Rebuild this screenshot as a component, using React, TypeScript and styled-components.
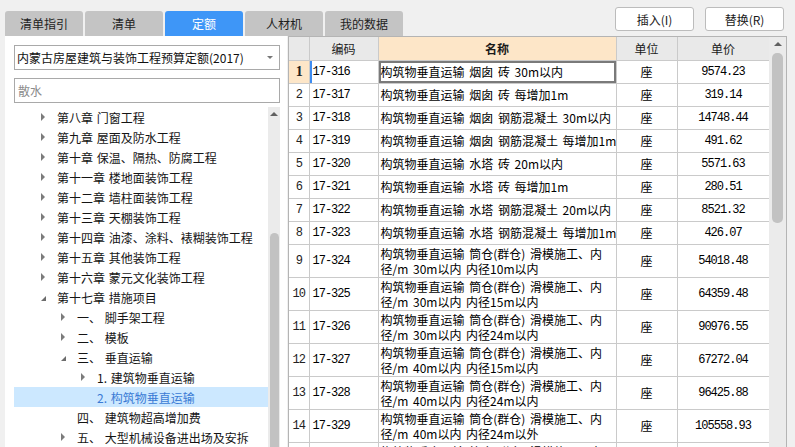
import React, { FC } from "react";
import styled, { createGlobalStyle } from "styled-components";

type TreeNode = {
  label: string;
  level: number;
  arrow: "closed" | "open" | "none";
  selected?: boolean;
};

type Row = {
  no: number;
  code: string;
  name: string;
  unit: string;
  price: string;
};

const tabs = ["清单指引", "清单", "定额", "人材机", "我的数据"];

const tree: TreeNode[] = [
  { label: "第八章 门窗工程", level: 1, arrow: "closed" },
  { label: "第九章 屋面及防水工程", level: 1, arrow: "closed" },
  { label: "第十章 保温、隔热、防腐工程", level: 1, arrow: "closed" },
  { label: "第十一章 楼地面装饰工程", level: 1, arrow: "closed" },
  { label: "第十二章 墙柱面装饰工程", level: 1, arrow: "closed" },
  { label: "第十三章 天棚装饰工程", level: 1, arrow: "closed" },
  { label: "第十四章 油漆、涂料、裱糊装饰工程", level: 1, arrow: "closed" },
  { label: "第十五章 其他装饰工程", level: 1, arrow: "closed" },
  { label: "第十六章 蒙元文化装饰工程", level: 1, arrow: "closed" },
  { label: "第十七章 措施项目", level: 1, arrow: "open" },
  { label: "一、 脚手架工程", level: 2, arrow: "closed" },
  { label: "二、 模板", level: 2, arrow: "closed" },
  { label: "三、 垂直运输", level: 2, arrow: "open" },
  { label: "1. 建筑物垂直运输", level: 3, arrow: "closed" },
  { label: "2. 构筑物垂直运输", level: 3, arrow: "none", selected: true },
  { label: "四、 建筑物超高增加费", level: 2, arrow: "none" },
  { label: "五、 大型机械设备进出场及安拆", level: 2, arrow: "closed" },
];

const silo = "构筑物垂直运输 筒仓(群仓) 滑模施工、内\n径/m ";

const rows: Row[] = [
  { no: 1, code: "17-316", name: "构筑物垂直运输 烟囱 砖 30m以内", unit: "座", price: "9574.23" },
  { no: 2, code: "17-317", name: "构筑物垂直运输 烟囱 砖 每增加1m", unit: "座", price: "319.14" },
  { no: 3, code: "17-318", name: "构筑物垂直运输 烟囱 钢筋混凝土 30m以内", unit: "座", price: "14748.44" },
  { no: 4, code: "17-319", name: "构筑物垂直运输 烟囱 钢筋混凝土 每增加1m", unit: "座", price: "491.62" },
  { no: 5, code: "17-320", name: "构筑物垂直运输 水塔 砖 20m以内", unit: "座", price: "5571.63" },
  { no: 6, code: "17-321", name: "构筑物垂直运输 水塔 砖 每增加1m", unit: "座", price: "280.51" },
  { no: 7, code: "17-322", name: "构筑物垂直运输 水塔 钢筋混凝土 20m以内", unit: "座", price: "8521.32" },
  { no: 8, code: "17-323", name: "构筑物垂直运输 水塔 钢筋混凝土 每增加1m", unit: "座", price: "426.07" },
  { no: 9, code: "17-324", name: silo + "30m以内 内径10m以内", unit: "座", price: "54018.48" },
  { no: 10, code: "17-325", name: silo + "30m以内 内径15m以内", unit: "座", price: "64359.48" },
  { no: 11, code: "17-326", name: silo + "30m以内 内径24m以内", unit: "座", price: "90976.55" },
  { no: 12, code: "17-327", name: silo + "40m以内 内径15m以内", unit: "座", price: "67272.04" },
  { no: 13, code: "17-328", name: silo + "40m以内 内径24m以内", unit: "座", price: "96425.88" },
  { no: 14, code: "17-329", name: silo + "40m以内 内径24m以外", unit: "座", price: "105558.93" },
  { no: 15, code: "17-330", name: silo + "50m以内 内径10m以内", unit: "座", price: "71860.25" },
];

const App: FC = () => {
  return (
    <>
      <GlobalStyle />
      <Page>
        <TopBar>
          <Tabs>
            {tabs.map((t) => (
              <Tab key={t} $active={t == "定额"}>
                {t}
              </Tab>
            ))}
          </Tabs>
          <Actions>
            <Button>插入(I)</Button>
            <Button>替换(R)</Button>
          </Actions>
        </TopBar>
        <Main>
          <Sidebar>
            <Select>
              <span>内蒙古房屋建筑与装饰工程预算定额(2017)</span>
              <SelectCaret />
            </Select>
            <SearchBox>散水</SearchBox>
            <TreeArea>
              <TreeList>
                {tree.map((n) => (
                  <TreeRow key={n.label} $level={n.level} $selected={n.selected}>
                    <ArrowBox>
                      {n.arrow == "closed" && <Closed />}
                      {n.arrow == "open" && <Open />}
                    </ArrowBox>
                    <span>{n.label}</span>
                  </TreeRow>
                ))}
              </TreeList>
              <ScrollBar $width={12}>
                <ScrollUp />
                <Thumb $top={117} $height={260} $width={9} />
              </ScrollBar>
            </TreeArea>
          </Sidebar>
          <TablePanel>
            <TableWrap>
              <Grid>
                <colgroup>
                  <col style={{ width: 20 }} />
                  <col style={{ width: 69 }} />
                  <col style={{ width: 238 }} />
                  <col style={{ width: 61 }} />
                  <col style={{ width: 92 }} />
                </colgroup>
                <thead>
                  <tr>
                    <HeadCell />
                    <HeadCell>编码</HeadCell>
                    <HeadCell $key>名称</HeadCell>
                    <HeadCell>单位</HeadCell>
                    <HeadCell>单价</HeadCell>
                  </tr>
                </thead>
                <tbody>
                  {rows.map((r) => {
                    const tall = r.name.includes("\n");
                    const active = r.no == 1;
                    return (
                      <tr key={r.no}>
                        <NoCell $tall={tall} $active={active}>
                          {r.no}
                        </NoCell>
                        <CodeCell $tall={tall} $active={active}>
                          {r.code}
                        </CodeCell>
                        <NameCell $tall={tall} $active={active}>
                          {r.name}
                        </NameCell>
                        <UnitCell $tall={tall}>{r.unit}</UnitCell>
                        <PriceCell $tall={tall}>{r.price}</PriceCell>
                      </tr>
                    );
                  })}
                </tbody>
              </Grid>
            </TableWrap>
            <ScrollBar $width={17}>
              <ScrollUp />
              <Thumb $top={7} $height={170} $width={11} />
            </ScrollBar>
          </TablePanel>
        </Main>
      </Page>
    </>
  );
};

const GlobalStyle = createGlobalStyle`
  html, body {
    margin: 0;
    padding: 0;
    background: #f0f0f0;
  }
  body {
    font-family: "Noto Sans CJK SC", "Noto Sans", sans-serif;
    font-size: 12px;
    color: #1a1a1a;
  }
  * {
    box-sizing: border-box;
  }
`;

const Page = styled.div`
  width: 795px;
  height: 447px;
  overflow: hidden;
  background: #f0f0f0;
  display: flex;
  flex-direction: column;
`;

const TopBar = styled.div`
  height: 36px;
  flex-shrink: 0;
  display: flex;
  align-items: flex-end;
  padding: 0 11px 0 5px;
`;

const Tabs = styled.div`
  display: flex;
  gap: 2px;
`;

const Tab = styled.div<{ $active?: boolean }>`
  width: 78px;
  height: 25px;
  display: flex;
  align-items: center;
  justify-content: center;
  border-radius: 3px 3px 0 0;
  background: ${(p) => (p.$active ? "#3e96f7" : "#c4c4c4")};
  color: ${(p) => (p.$active ? "#ffffff" : "#1e1e1e")};
  font-size: 12px;
`;

const Actions = styled.div`
  margin-left: auto;
  align-self: flex-start;
  margin-top: 7px;
  display: flex;
  gap: 11px;
`;

const Button = styled.button`
  width: 79px;
  height: 24px;
  padding: 0;
  background: #fff;
  border: 1px solid #bcbcbc;
  border-radius: 3px;
  font-family: "Noto Sans CJK SC", "Noto Sans", sans-serif;
  font-size: 12px;
  color: #1a1a1a;
`;

const Main = styled.div`
  flex: 1;
  min-height: 0;
  display: flex;
  gap: 1px;
  padding: 0 8px 0 5px;
`;

const Sidebar = styled.div`
  width: 282px;
  flex-shrink: 0;
  background: #fff;
  display: flex;
  flex-direction: column;
  padding: 9px 7px 0 9px;
`;

const Select = styled.div`
  height: 25px;
  border: 1px solid #a9a9a9;
  display: flex;
  align-items: center;
  justify-content: space-between;
  padding: 0 6px 0 2px;
  font-size: 12px;
  color: #101010;
`;

const SelectCaret = styled.i`
  width: 0;
  height: 0;
  border-left: 3px solid transparent;
  border-right: 3px solid transparent;
  border-top: 3px solid #777;
`;

const SearchBox = styled.div`
  margin-top: 8px;
  height: 25px;
  border: 1px solid #a9a9a9;
  display: flex;
  align-items: center;
  padding: 0 3px;
  color: #8c8c8c;
  font-size: 12px;
`;

const TreeArea = styled.div`
  margin-top: 4px;
  flex: 1;
  min-height: 0;
  display: flex;
`;

const TreeList = styled.div`
  flex: 1;
  overflow: hidden;
`;

const TreeRow = styled.div<{ $level: number; $selected?: boolean }>`
  height: 20px;
  display: flex;
  align-items: center;
  gap: 6px;
  padding-left: ${(p) => 21 + 20 * (p.$level - 1)}px;
  background: ${(p) => (p.$selected ? "#cce8ff" : "transparent")};
  color: ${(p) => (p.$selected ? "#3a7bd5" : "#141414")};
  font-size: 12px;
  word-spacing: 1px;
  white-space: nowrap;
`;

const ArrowBox = styled.span`
  width: 16px;
  height: 20px;
  display: flex;
  align-items: center;
  justify-content: center;
`;

const Closed = styled.i`
  width: 0;
  height: 0;
  border-top: 4px solid transparent;
  border-bottom: 4px solid transparent;
  border-left: 4px solid #7c7c7c;
`;

const Open = styled.i`
  width: 0;
  height: 0;
  border-left: 5px solid transparent;
  border-bottom: 5px solid #6c6c6c;
  margin-top: 2px;
`;

const ScrollBar = styled.div<{ $width: number }>`
  width: ${(p) => p.$width}px;
  flex-shrink: 0;
  background: #ebebeb;
  display: flex;
  flex-direction: column;
  align-items: center;
  overflow: hidden;
`;

const ScrollUp = styled.i`
  margin-top: 5px;
  width: 0;
  height: 0;
  border-left: 4px solid transparent;
  border-right: 4px solid transparent;
  border-bottom: 4px solid #606060;
  flex-shrink: 0;
`;

const Thumb = styled.div<{ $top: number; $height: number; $width: number }>`
  margin-top: ${(p) => p.$top}px;
  width: ${(p) => p.$width}px;
  height: ${(p) => p.$height}px;
  flex-shrink: 0;
  background: #c2c2c2;
  border-radius: 5px;
`;

const TablePanel = styled.div`
  width: 499px;
  flex-shrink: 0;
  border: 1px solid #b4b4b4;
  border-bottom: none;
  background: #fff;
  display: flex;
  overflow: hidden;
`;

const TableWrap = styled.div`
  width: 480px;
  flex-shrink: 0;
  overflow: hidden;
`;

const Grid = styled.table`
  width: 480px;
  table-layout: fixed;
  border-collapse: collapse;
  font-size: 12px;
  color: #000;
  td,
  th {
    border: 1px solid #cacaca;
    padding: 0;
    overflow: hidden;
  }
  tr > *:first-child {
    border-left: none;
  }
  thead th {
    border-top: none;
  }
`;

const HeadCell = styled.th<{ $key?: boolean }>`
  height: 23px;
  background: ${(p) => (p.$key ? "#fde6c8" : "#e9e9e9")};
  font-weight: ${(p) => (p.$key ? 700 : 400)};
  font-size: 12px;
  text-align: center;
  color: #1a1a1a;
`;

const Cell = styled.td<{ $tall?: boolean }>`
  height: ${(p) => (p.$tall ? 33 : 23)}px;
  white-space: nowrap;
`;

const NoCell = styled(Cell)<{ $active?: boolean }>`
  text-align: center;
  background: ${(p) => (p.$active ? "#fde6c8" : "#fff")};
  font-family: ${(p) =>
    p.$active ? `"Liberation Serif", serif` : `"Liberation Mono", monospace`};
  font-weight: ${(p) => (p.$active ? 700 : 400)};
  font-size: ${(p) => (p.$active ? 14 : 12)}px;
  letter-spacing: -1px;
  color: #222;
`;

const CodeCell = styled(Cell)<{ $active?: boolean }>`
  padding-left: 3px !important;
  font-family: "Liberation Mono", monospace;
  letter-spacing: -1px;
  box-shadow: ${(p) => (p.$active ? "inset 2px 0 0 #3d8cf0" : "none")};
`;

const NameCell = styled(Cell)<{ $active?: boolean }>`
  padding: 0 2px !important;
  line-height: 15px;
  white-space: pre;
  word-spacing: 2px;
  box-shadow: ${(p) => (p.$active ? "inset 0 0 0 2px #7a7a7a" : "none")};
`;

const UnitCell = styled(Cell)`
  text-align: center;
`;

const PriceCell = styled(Cell)`
  text-align: center;
  font-family: "Liberation Mono", monospace;
  letter-spacing: -1px;
`;

export default App;
